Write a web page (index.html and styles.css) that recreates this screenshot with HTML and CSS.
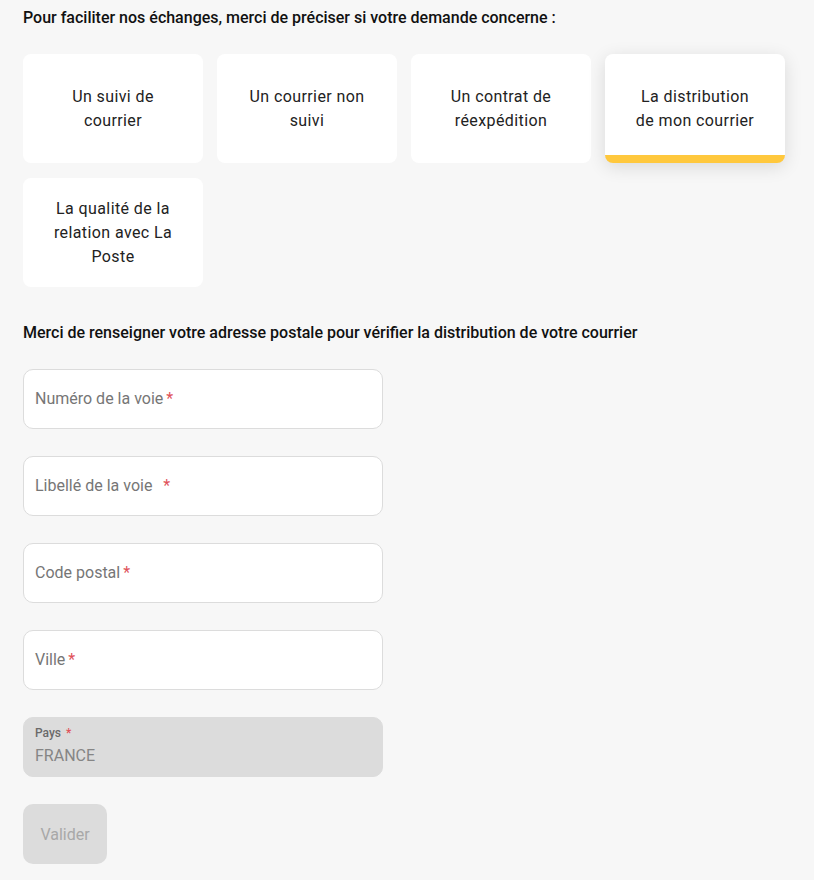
FILE: index.html
```html
<!DOCTYPE html>
<html lang="fr">
<head>
    <meta charset="UTF-8">
    <meta name="viewport" content="width=device-width, initial-scale=1.0">
    <title>Contact - Distribution</title>
    <link rel="stylesheet" href="styles.css">
</head>
<body>
    <div class="page">
        <h2 class="question">Pour faciliter nos échanges, merci de préciser si votre demande concerne :</h2>

        <div class="choices">
            <div class="choice">Un suivi de courrier</div>
            <div class="choice">Un courrier non suivi</div>
            <div class="choice">Un contrat de réexpédition</div>
            <div class="choice active">La distribution de mon courrier</div>
            <div class="choice">La qualité de la relation avec La Poste</div>
        </div>

        <h2 class="question second">Merci de renseigner votre adresse postale pour vérifier la distribution de votre courrier</h2>

        <form class="address">
            <div class="field">Numéro de la voie<span class="req">*</span></div>
            <div class="field">Libellé de la voie &nbsp;<span class="req">*</span></div>
            <div class="field">Code postal<span class="req">*</span></div>
            <div class="field">Ville<span class="req">*</span></div>
            <div class="field disabled">
                <div class="small-label">Pays <span class="req">*</span></div>
                <div class="value">FRANCE</div>
            </div>
            <button type="button" class="submit" disabled>Valider</button>
        </form>
    </div>
</body>
</html>
```

FILE: styles.css
```css
body {
    font-family: Roboto, "Liberation Sans", Arial, sans-serif;
    background-color: #f7f7f7;
    margin: 0;
    color: #1a1a1a;
}

.page {
    padding: 8px 23px 20px;
}

.question {
    font-size: 16px;
    font-weight: 500;
    line-height: 20px;
    margin: 0 0 26px;
    color: #111;
}

.question.second {
    margin-top: 36px;
}

.choices {
    display: grid;
    grid-template-columns: repeat(4, 180px);
    column-gap: 14px;
    row-gap: 15px;
}

.choice {
    height: 109px;
    box-sizing: border-box;
    background-color: white;
    border-radius: 8px;
    display: flex;
    align-items: center;
    justify-content: center;
    text-align: center;
    padding: 0 30px;
    font-size: 16px;
    line-height: 24px;
    letter-spacing: 0.4px;
    color: #222;
    cursor: pointer;
}

.choice.active {
    border-bottom: 8px solid #ffc83d;
    padding-top: 8px;
    box-shadow: 0 4px 18px rgba(0, 0, 0, 0.12);
}

.address {
    display: flex;
    flex-direction: column;
    align-items: flex-start;
    gap: 27px;
}

.field {
    width: 360px;
    height: 60px;
    box-sizing: border-box;
    background-color: white;
    border: 1px solid #dcdcdc;
    border-radius: 10px;
    padding: 0 11px 2px;
    display: flex;
    align-items: center;
    font-size: 16px;
    color: #767676;
}

.req {
    color: #e0525a;
    margin-left: 3px;
}

.field.disabled {
    background-color: #dcdcdc;
    border-color: #dcdcdc;
    flex-direction: column;
    align-items: flex-start;
    justify-content: center;
    padding-bottom: 4px;
}

.small-label {
    font-size: 12px;
    font-weight: 500;
    color: #6a6a6a;
    line-height: 16px;
    margin-bottom: 5px;
}

.small-label .req {
    margin-left: 2px;
}

.value {
    font-size: 16px;
    line-height: 20px;
    color: #858585;
}

.submit {
    width: 84px;
    height: 60px;
    border: none;
    border-radius: 10px;
    background-color: #dcdcdc;
    color: #a8a8a8;
    font-family: inherit;
    font-size: 16px;
    padding: 0;
}
```
